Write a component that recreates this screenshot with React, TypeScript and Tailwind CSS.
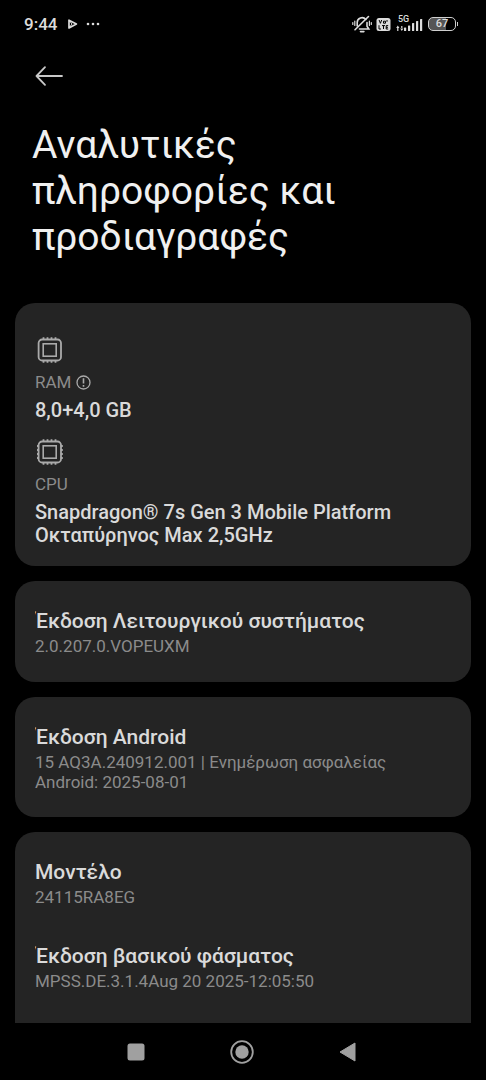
import React from "react";

function StatusBar() {
  return (
    <div className="flex h-12 shrink-0 items-center justify-between pl-6 pr-7 text-[#dcdcdc]">
      <div className="flex items-center">
        <span className="text-[17px]/6 font-medium">9:44</span>
        <svg className="ml-[10px] h-3 w-3" viewBox="0 0 12 12" fill="none" stroke="currentColor" strokeWidth="1.7" strokeLinejoin="round" aria-hidden="true">
          <path d="M2 2.2V10L9.4 6z" />
          <path d="M2 2.2L5 6L2 10" strokeWidth="1" />
        </svg>
        <svg className="ml-1.5 h-3 w-4" viewBox="0 0 16 12" fill="currentColor" aria-hidden="true">
          <circle cx="3" cy="6" r="1.3" />
          <circle cx="8" cy="6" r="1.3" />
          <circle cx="13" cy="6" r="1.3" />
        </svg>
      </div>
      <div className="flex items-center">
        <svg className="h-5 w-5" viewBox="0 0 20 20" fill="none" stroke="currentColor" strokeWidth="1.6" strokeLinecap="round" aria-hidden="true">
          <path d="M5.2 12V8.5a4.8 4.8 0 0 1 8.6-3M15 8.5v3.7l1.8 2.8H7.5" />
          <path d="M8.5 17.6h3.4" />
          <path d="M16.5 2.5L3 15.8" />
          <path d="M2.8 7v4.5M.8 8.5v2M17.4 7v4.5M19.3 8.5v2" strokeWidth="1.2" />
        </svg>
        <svg className="ml-1 h-4 w-4" viewBox="0 0 16 16" aria-hidden="true">
          <rect x="0.5" y="2" width="14" height="13" rx="2.5" fill="currentColor" />
          <path d="M3.1 4l1.3 3.3L5.7 4M7.5 5.2h2v2h-2zM11 4v1.8M3 9.2V13h2M6 9.6h3M7.5 9.6V13M12.2 9.6h-2V13h2M10.2 11.3H12" fill="none" stroke="#000" strokeWidth="1" />
        </svg>
        <div className="relative ml-1 h-5 w-7">
          <span className="absolute left-0.5 top-0 text-[9px] font-medium leading-[10px]">5G</span>
          <svg className="h-5 w-7" viewBox="0 0 28 20" fill="currentColor" aria-hidden="true">
            <path d="M1.8 11.5L3.4 14H.2zM1.2 13.5h1.2V17H1.2zM5.8 17l1.6-2.5H4.2zM5.2 12h1.2v3H5.2z" />
            <rect x="8" y="13.5" width="2.2" height="3.5" rx=".6" />
            <rect x="12" y="11.5" width="2.2" height="5.5" rx=".6" />
            <rect x="16" y="9" width="2.2" height="8" rx=".6" />
            <rect x="20" y="7" width="2.2" height="10" rx=".6" />
            <rect x="24" y="5" width="2.2" height="12" rx=".6" />
          </svg>
        </div>
        <div className="ml-1 flex items-center gap-px">
          <div className="flex h-[14px] w-[28px] items-center justify-center rounded-[5px] border-[1.5px] border-[#cfcfcf] bg-linear-to-r from-[#555] from-65% to-black to-65% text-[11px] font-medium leading-3">
            67
          </div>
          <div className="h-1 w-px bg-[#cfcfcf]" />
        </div>
      </div>
    </div>
  );
}

function ChipIcon({ sides = false }: { sides?: boolean }) {
  return (
    <svg className="ml-0.5 h-[26px] w-[26px] text-[#aaaaaa]" viewBox="0 0 26 26" fill="none" stroke="currentColor" strokeWidth="1.8" aria-hidden="true">
      <rect x="1.6" y="2.5" width="22.4" height="21" rx="3.5" />
      <rect x="6.2" y="6.8" width="13" height="12.4" strokeWidth="1.6" />
      <path d="M6.5 .2v2.3M10.5 .2v2.3M14.5 .2v2.3M18.5 .2v2.3M6.5 23.5v2.3M10.5 23.5v2.3M14.5 23.5v2.3M18.5 23.5v2.3" />
      {sides && <path d="M0 7h2M0 11h2M0 15h2M0 19h2M23.8 7h2M23.8 11h2M23.8 15h2M23.8 19h2" />}
    </svg>
  );
}

function Entry({ title, children }: { title: string; children: React.ReactNode }) {
  return (
    <div>
      <h2 className="overflow-hidden text-[21px]/6 font-medium text-[#dadada]">{title}</h2>
      <p className="mt-[3px] text-[17px]/5 text-[#8b8b8b]">{children}</p>
    </div>
  );
}

export default function App() {
  return (
    <div className="flex h-screen flex-col bg-black font-['Roboto','Noto_Sans',sans-serif]">
      <StatusBar />
      <header className="shrink-0 px-8">
        <button type="button" aria-label="Πίσω" className="block py-4 text-[#c8c8c8]">
          <svg className="h-6 w-8" viewBox="0 0 32 24" fill="none" stroke="currentColor" strokeWidth="1.8" strokeLinecap="round" strokeLinejoin="round" aria-hidden="true">
            <path d="M30 12H4.5M13 3.2L4.5 12l8.5 8.8" />
          </svg>
        </button>
        <h1 className="mt-[18px] max-w-[360px] text-[39px]/[46px] text-[#f0f0f0]">
          Αναλυτικές πληροφορίες και προδιαγραφές
        </h1>
      </header>
      <main className="mt-[43px] flex min-h-0 flex-1 flex-col gap-[15px] overflow-hidden px-[15px]">
        <section className="shrink-0 rounded-[20px] bg-[#242424] px-5 pb-[19px] pt-[34px]">
          <ChipIcon />
          <div className="mt-[9px] flex items-center gap-[5px] text-[17px]/5 text-[#8b8b8b]">
            RAM
            <svg className="h-[15px] w-[15px] text-[#aaaaaa]" viewBox="0 0 15 15" fill="none" stroke="currentColor" strokeWidth="1.3" aria-hidden="true">
              <circle cx="7.5" cy="7.5" r="6.5" />
              <path d="M7.5 3.2v5.3M7.5 10v1.8" strokeWidth="1.6" />
            </svg>
          </div>
          <p className="mt-[7px] text-xl/[23px] font-medium text-[#dadada]">8,0+4,0 GB</p>
          <div className="mt-[17px]">
            <ChipIcon sides />
          </div>
          <div className="mt-[9px] text-[17px]/5 text-[#8b8b8b]">CPU</div>
          <p className="mt-[7px] text-xl/[23px] font-medium text-[#dadada]">
            Snapdragon® 7s Gen 3 Mobile Platform
            <br />
            Οκταπύρηνος Max 2,5GHz
          </p>
        </section>
        <section className="shrink-0 rounded-[20px] bg-[#242424] px-5 pb-[26px] pt-7">
          <Entry title="Έκδοση Λειτουργικού συστήματος">2.0.207.0.VOPEUXM</Entry>
        </section>
        <section className="shrink-0 rounded-[20px] bg-[#242424] px-5 pb-[25px] pt-7">
          <Entry title="Έκδοση Android">
            15 AQ3A.240912.001 | Ενημέρωση ασφαλείας Android: 2025-08-01
          </Entry>
        </section>
        <section className="flex flex-1 shrink-0 flex-col gap-[37px] rounded-t-[20px] bg-[#242424] px-5 pt-7">
          <Entry title="Μοντέλο">24115RA8EG</Entry>
          <Entry title="Έκδοση βασικού φάσματος">MPSS.DE.3.1.4Aug 20 2025-12:05:50</Entry>
        </section>
      </main>
      <nav className="flex h-[57px] shrink-0 items-center justify-center gap-[82px] pr-[3px] text-[#a0a0a0]">
        <button type="button" aria-label="Πρόσφατα">
          <svg className="h-6 w-6" viewBox="0 0 24 24" fill="currentColor" aria-hidden="true">
            <rect x="3.5" y="3.5" width="17" height="17" rx="2.5" />
          </svg>
        </button>
        <button type="button" aria-label="Αρχική">
          <svg className="h-6 w-6" viewBox="0 0 24 24" fill="currentColor" aria-hidden="true">
            <circle cx="12" cy="12" r="10.8" fill="none" stroke="currentColor" strokeWidth="1.8" />
            <circle cx="12" cy="12" r="6.7" />
          </svg>
        </button>
        <button type="button" aria-label="Πίσω">
          <svg className="h-6 w-6" viewBox="0 0 24 24" fill="currentColor" stroke="currentColor" strokeLinejoin="round" aria-hidden="true">
            <path d="M19 3v18L4 12z" />
          </svg>
        </button>
      </nav>
    </div>
  );
}
